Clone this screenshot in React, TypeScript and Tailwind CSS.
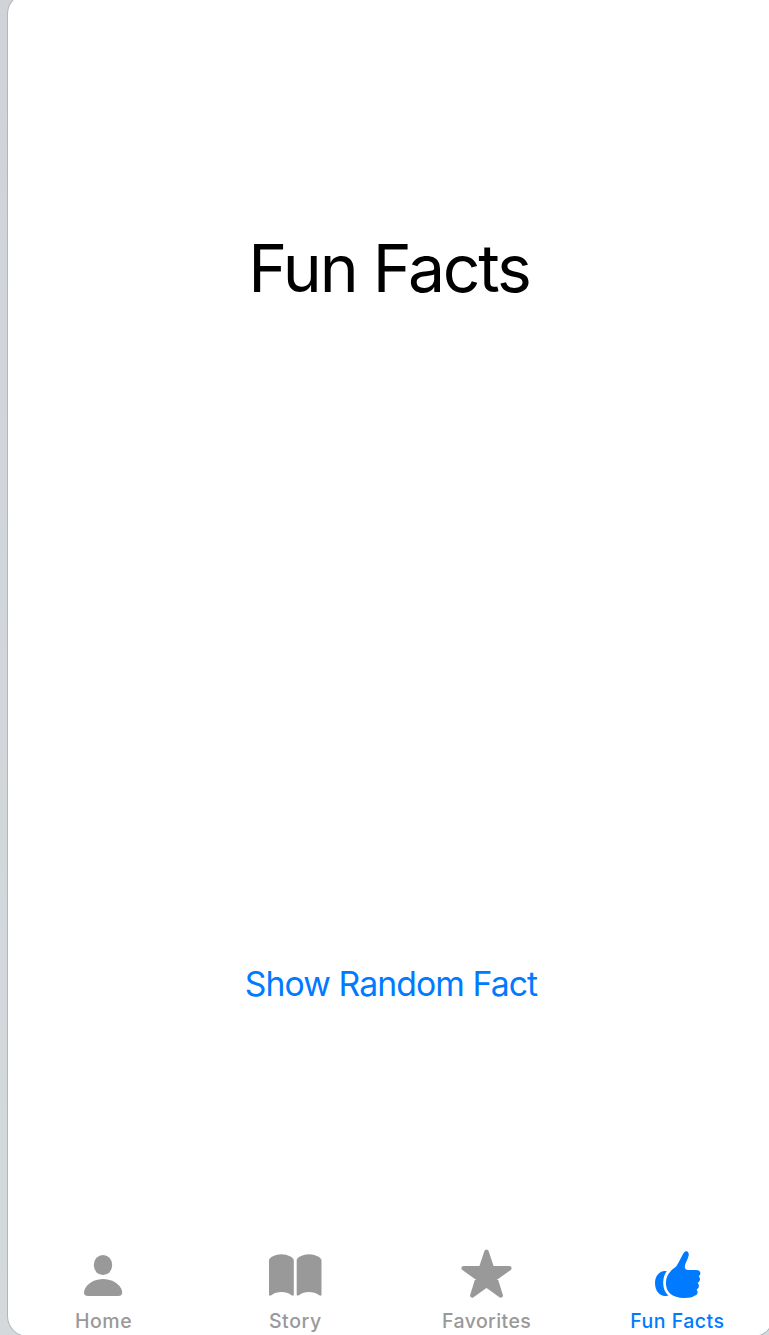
import type { ReactNode } from "react";

type Tab = { label: string; active?: boolean; labelClass: string; icon: ReactNode };

const iconClass = "block h-[60px] w-[64px]";

const tabs: Tab[] = [
  {
    label: "Home",
    labelClass: "tracking-[0.6px]",
    icon: (
      <svg viewBox="72 1240 64 60" className={iconClass} fill="currentColor" aria-hidden="true">
        <ellipse cx="103" cy="1265" rx="9.2" ry="10.1" />
        <path d="M84 1292.5C84 1287.5 90.5 1279 103.1 1279S122.2 1287.5 122.2 1292.5C122.2 1295 120.7 1296 118.2 1296H88C85.5 1296 84 1295 84 1292.5Z" />
      </svg>
    ),
  },
  {
    label: "Story",
    labelClass: "tracking-[0.6px] pl-px",
    icon: (
      <svg viewBox="263 1240 64 60" className={iconClass} fill="currentColor" aria-hidden="true">
        <path d="M269 1260.3C269 1257.5 275.5 1254.3 281.4 1254.3C287.5 1254.3 293.8 1257.5 293.8 1260.3V1294.5C293.8 1295.8 292.6 1296 291.6 1295.2C286 1291 277 1291 271.3 1295.2C270.2 1296 269 1295.8 269 1294.5Z" />
        <path d="M296.7 1260.3C296.7 1257.5 303 1254.3 309.1 1254.3C315 1254.3 321.5 1257.5 321.5 1260.3V1294.5C321.5 1295.8 320.3 1296 319.2 1295.2C313.5 1291 304.5 1291 298.9 1295.2C297.9 1296 296.7 1295.8 296.7 1294.5Z" />
      </svg>
    ),
  },
  {
    label: "Favorites",
    labelClass: "tracking-[0.4px] pl-px",
    icon: (
      <svg viewBox="454 1240 64 60" className={iconClass} fill="currentColor" stroke="currentColor" strokeWidth="4.4" strokeLinejoin="round" aria-hidden="true">
        <path d="M486.5 1251.8L492 1268.2H509.4L495.4 1278.3L500.7 1295.5L486.5 1285.2L472.3 1295.5L477.6 1278.3L463.6 1268.2H481Z" />
      </svg>
    ),
  },
  {
    label: "Fun Facts",
    active: true,
    labelClass: "tracking-[0.5px]",
    icon: (
      <svg viewBox="645 1240 64 60" className={iconClass} fill="currentColor" aria-hidden="true">
        <path d="M665.9 1271C661.2 1270.1 655 1274.5 655 1283C655 1291.5 660 1296 665 1295.9C666.3 1295.9 668 1295.9 668.4 1295.5C664.8 1292.3 663.2 1288 663.2 1283C663.2 1278 664.5 1274 666.7 1271.3Z" />
        <path d="M665.9 1283C665.9 1276.5 669 1271.8 674.3 1268.1C677 1266.2 677.3 1264.5 678.7 1262.3L683.3 1253.5C684.1 1252 685 1251 686.5 1251.2C688.1 1251.4 689.2 1253.2 688.6 1255.8C687.7 1260 685 1263.5 684.8 1266.5C684.6 1268.8 685.8 1269.9 688.3 1269.9H696C700.9 1269.9 701.5 1274.2 698.8 1276.2C700.8 1278.6 700.3 1281.5 697.7 1282.8C699.7 1285.4 699.2 1288.2 696.7 1289.4C698.6 1292.4 697.3 1295.1 694.5 1295.8C692.5 1297.3 689.5 1298 684.5 1298C671.5 1298 665.9 1291.5 665.9 1283Z" />
      </svg>
    ),
  },
];

export default function App() {
  return (
    <div className="h-[1335px] w-full overflow-hidden bg-linear-to-b from-[#d0d4d9] to-[#d4d9dc] pl-2 font-['Inter',sans-serif]">
      <main className="-mt-1.5 flex h-[1342px] w-[765px] flex-col rounded-[20px] rounded-tr-2xl bg-white shadow-[0_0_0_1px_#b2b6ba]">
        <h1 className="mt-[234px] pr-[3px] text-center text-[66px] leading-20 font-normal tracking-[-2.2px] text-black">
          Fun Facts
        </h1>
        <button className="mt-[656px] h-10 self-center pl-px text-[33.75px] leading-10 font-normal tracking-[-0.92px] text-[#007aff]">
          Show Random Fact
        </button>
        <nav className="mt-auto mb-px grid h-[95px] grid-cols-4">
          {tabs.map(({ label, active, icon, labelClass }) => (
            <button
              key={label}
              className={`flex flex-col items-center ${active ? "text-[#007aff]" : "text-[#999999]"}`}
            >
              {icon}
              <span className={`mt-[9px] text-[19.5px] leading-6 font-medium whitespace-nowrap ${labelClass}`}>{label}</span>
            </button>
          ))}
        </nav>
      </main>
    </div>
  );
}
